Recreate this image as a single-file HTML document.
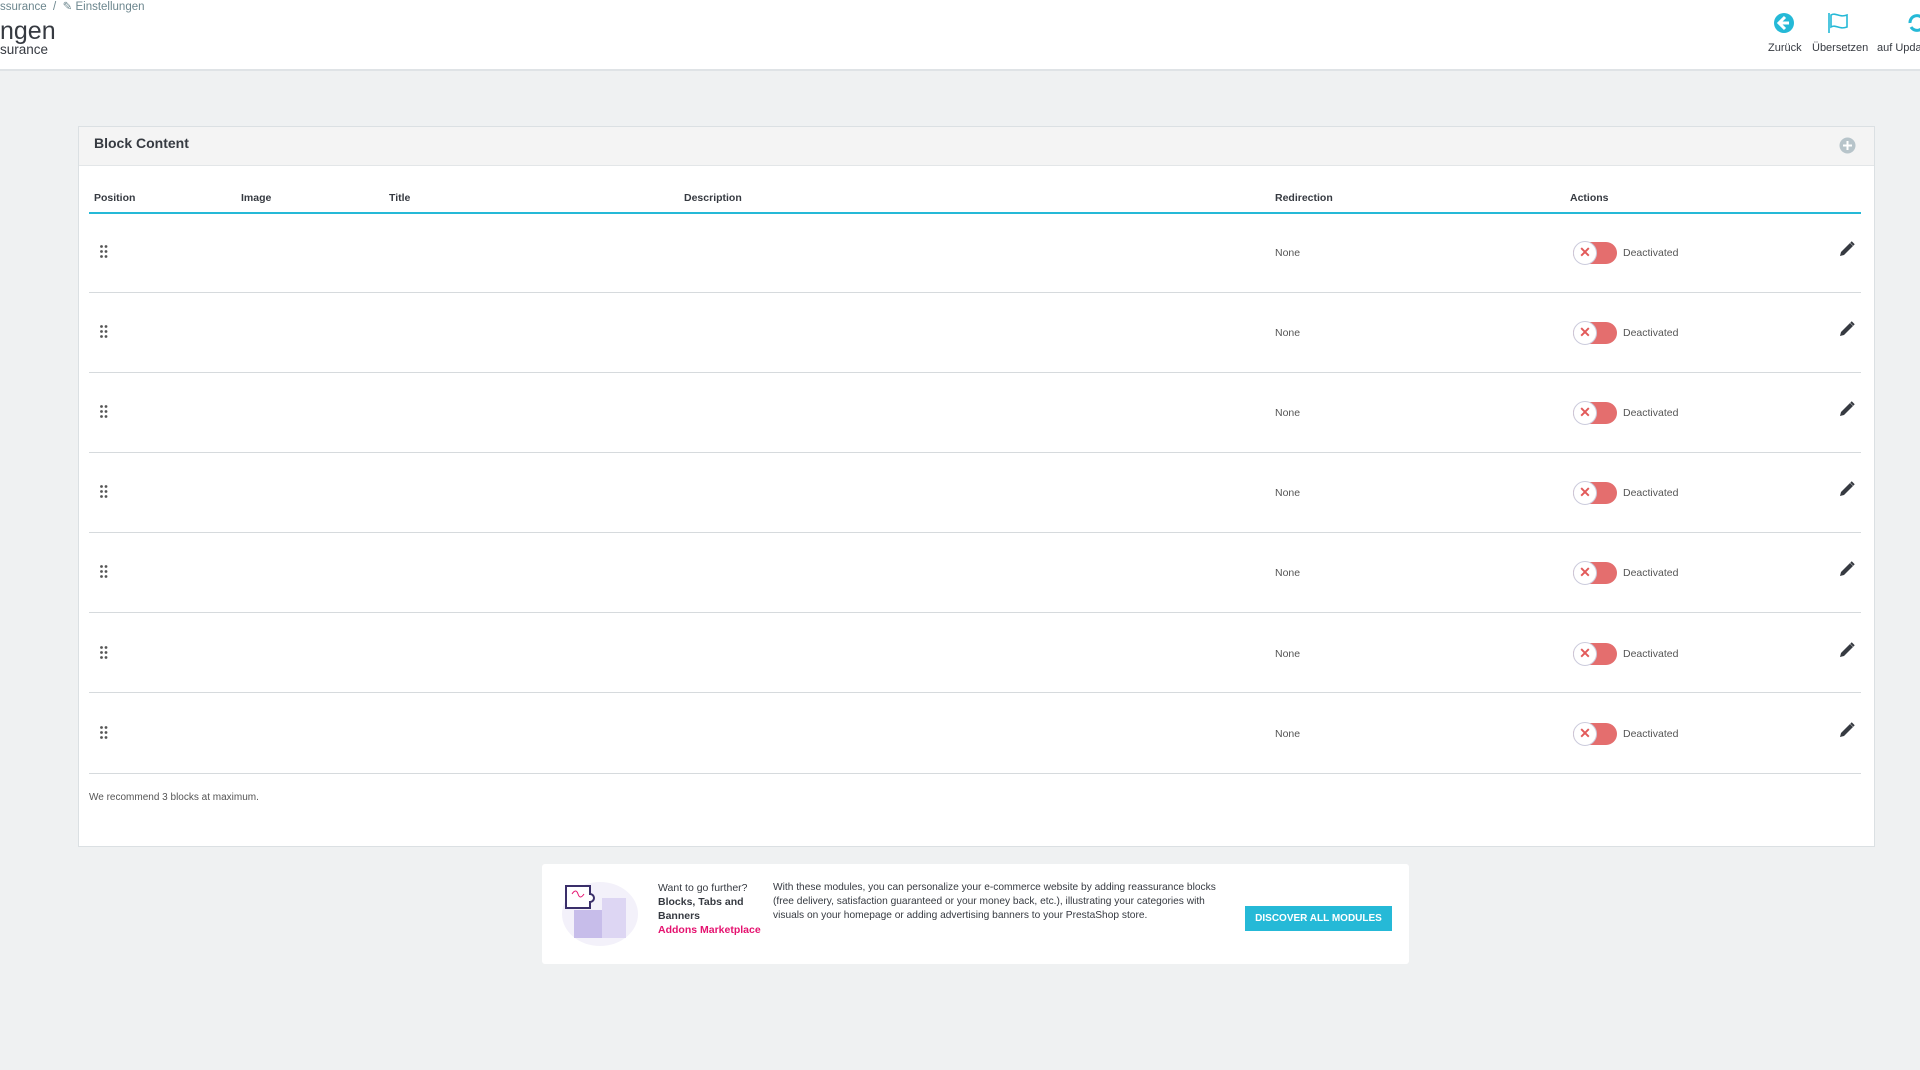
<!DOCTYPE html>
<html><head><meta charset="utf-8"><style>
*{box-sizing:border-box;margin:0;padding:0}
body{width:1920px;height:1070px;background:#eff1f2;font-family:"Liberation Sans",sans-serif;color:#363a41;position:relative;overflow:hidden}
.hdr{position:absolute;left:0;top:0;width:1920px;height:71px;background:#fff;border-bottom:2px solid #dfe3e6}
.abs{position:absolute;white-space:nowrap}
.panel{position:absolute;left:78px;top:126px;width:1797px;height:721px;background:#fff;border:1px solid #dbe0e3}
.ph{height:39px;background:#f4f4f4;border-bottom:1px solid #e3e6e8}
.th{position:absolute;top:192px;font-size:10.5px;font-weight:bold;color:#363a41}
.row{position:absolute;left:89px;width:1772px;border-bottom:1px solid #d6dadd;height:80px}
.t{font-size:10.5px;color:#555}
.tog{position:absolute;width:44px;height:22px;border-radius:11px;background:#e46e6e}
.tog .k{position:absolute;left:0;top:-1px;width:24px;height:24px;border-radius:12px;background:#fff;border:1px solid #ccd;color:#e25a5a;font-size:14px;font-weight:bold;text-align:center;line-height:21px}
</style></head><body>
<div class="hdr"></div>
<div class="abs" style="left:0;top:-1px;font-size:11.5px;color:#6c868e">ssurance &nbsp;/ &nbsp;✎ Einstellungen</div>
<div class="abs" style="left:0;top:17px;font-size:25px;color:#363a41">ngen</div>
<div class="abs" style="left:0;top:42px;font-size:13.5px;color:#363a41">surance</div>
<svg class="abs" style="left:1773px;top:12px" width="22" height="22" viewBox="0 0 22 22"><circle cx="11" cy="11" r="10" fill="#25b9d7"/><path d="M12 5l-6 6 6 6M6 11h10" stroke="#fff" stroke-width="3" fill="none"/></svg>
<div class="abs" style="left:1768px;top:42px;font-size:11px;color:#363a41">Zurück</div>
<svg class="abs" style="left:1827px;top:12px" width="24" height="22" viewBox="0 0 24 22"><path d="M2 1v20M4 3c5-3 8 3 16 0v12c-8 3-11-3-16 0z" stroke="#25b9d7" stroke-width="1.6" fill="none"/></svg>
<div class="abs" style="left:1812px;top:42px;font-size:11px;color:#363a41">Übersetzen</div>
<svg class="abs" style="left:1906px;top:12px" width="22" height="22" viewBox="0 0 22 22"><path d="M4 11a7 7 0 0 1 13-4M18 11a7 7 0 0 1-13 4" stroke="#25b9d7" stroke-width="3" fill="none"/></svg>
<div class="abs" style="left:1877px;top:42px;font-size:11px;color:#363a41">auf Upda</div>

<div class="panel"><div class="ph"></div></div>
<div class="abs" style="left:94px;top:135px;font-size:14px;font-weight:bold">Block Content</div>
<svg class="abs" style="left:1839px;top:137px" width="17" height="17"><circle cx="8.5" cy="8.5" r="8" fill="#b7c4ca"/><path d="M8.5 4v9M4 8.5h9" stroke="#fff" stroke-width="2"/></svg>
<div class="th" style="left:94px">Position</div>
<div class="th" style="left:241px">Image</div>
<div class="th" style="left:389px">Title</div>
<div class="th" style="left:684px">Description</div>
<div class="th" style="left:1275px">Redirection</div>
<div class="th" style="left:1570px">Actions</div>
<div class="abs" style="left:89px;top:212px;width:1772px;height:2px;background:#25b9d7"></div>

<div class="row" style="top:213px"></div>
<div class="row" style="top:293px"></div>
<div class="row" style="top:373px"></div>
<div class="row" style="top:453px"></div>
<div class="row" style="top:533px"></div>
<div class="row" style="top:613px"></div>
<div class="row" style="top:694px"></div>

<script>
var ys=[252,332,412,492,572,653,733],h='';
ys.forEach(function(y){
h+='<svg class="abs" style="left:100px;top:'+(y-7)+'px" width="8" height="14"><g fill="#555"><circle cx="1.5" cy="1.5" r="1.4"/><circle cx="6" cy="1.5" r="1.4"/><circle cx="1.5" cy="6.5" r="1.4"/><circle cx="6" cy="6.5" r="1.4"/><circle cx="1.5" cy="11.5" r="1.4"/><circle cx="6" cy="11.5" r="1.4"/></g></svg>';
h+='<div class="abs t" style="left:1275px;top:'+(y-5)+'px">None</div>';
h+='<div class="tog" style="left:1573px;top:'+(y-10)+'px"><div class="k">✕</div></div>';
h+='<div class="abs t" style="left:1623px;top:'+(y-5)+'px">Deactivated</div>';
h+='<svg class="abs" style="left:1839px;top:'+(y-11)+'px" width="16" height="16" viewBox="0 0 16 16"><path d="M1 15l1-4 9-9 3 3-9 9z" fill="#363a41"/><path d="M12 1l3 3" stroke="#363a41" stroke-width="2"/></svg>';
});
document.write(h);
</script>
<div class="abs t" style="left:89px;top:792px;font-size:10px">We recommend 3 blocks at maximum.</div>

<div class="abs" style="left:542px;top:864px;width:867px;height:100px;background:#fff;border-radius:3px"></div>
<svg class="abs" style="left:560px;top:878px" width="82" height="70" viewBox="0 0 82 70"><ellipse cx="40" cy="36" rx="38" ry="32" fill="#f3f1fa"/><rect x="14" y="32" width="28" height="28" fill="#c7bdea"/><rect x="42" y="20" width="24" height="40" fill="#ddd6f3"/><path d="M6 8h24v8a4 4 0 1 1 0 8v6H6z" fill="#fff" stroke="#3a2f6a" stroke-width="2"/><path d="M12 16q4-6 6 0t6 0" stroke="#e5126f" fill="none"/></svg>
<div class="abs" style="left:658px;top:881px;font-size:10.5px;line-height:14px;color:#363a41">Want to go further?<br><b>Blocks, Tabs and<br>Banners</b><br><b style="color:#e5126f">Addons Marketplace</b></div>
<div class="abs" style="left:773px;top:881px;font-size:10.2px;line-height:14px;color:#363a41">With these modules, you can personalize your e-commerce website by adding reassurance blocks<br>(free delivery, satisfaction guaranteed or your money back, etc.), illustrating your categories with<br>visuals on your homepage or adding advertising banners to your PrestaShop store.</div>
<div class="abs" style="left:1245px;top:906px;width:147px;height:25px;background:#25b9d7;color:#fff;font-size:10px;font-weight:bold;text-align:center;line-height:25px">DISCOVER ALL MODULES</div>
</body></html>
